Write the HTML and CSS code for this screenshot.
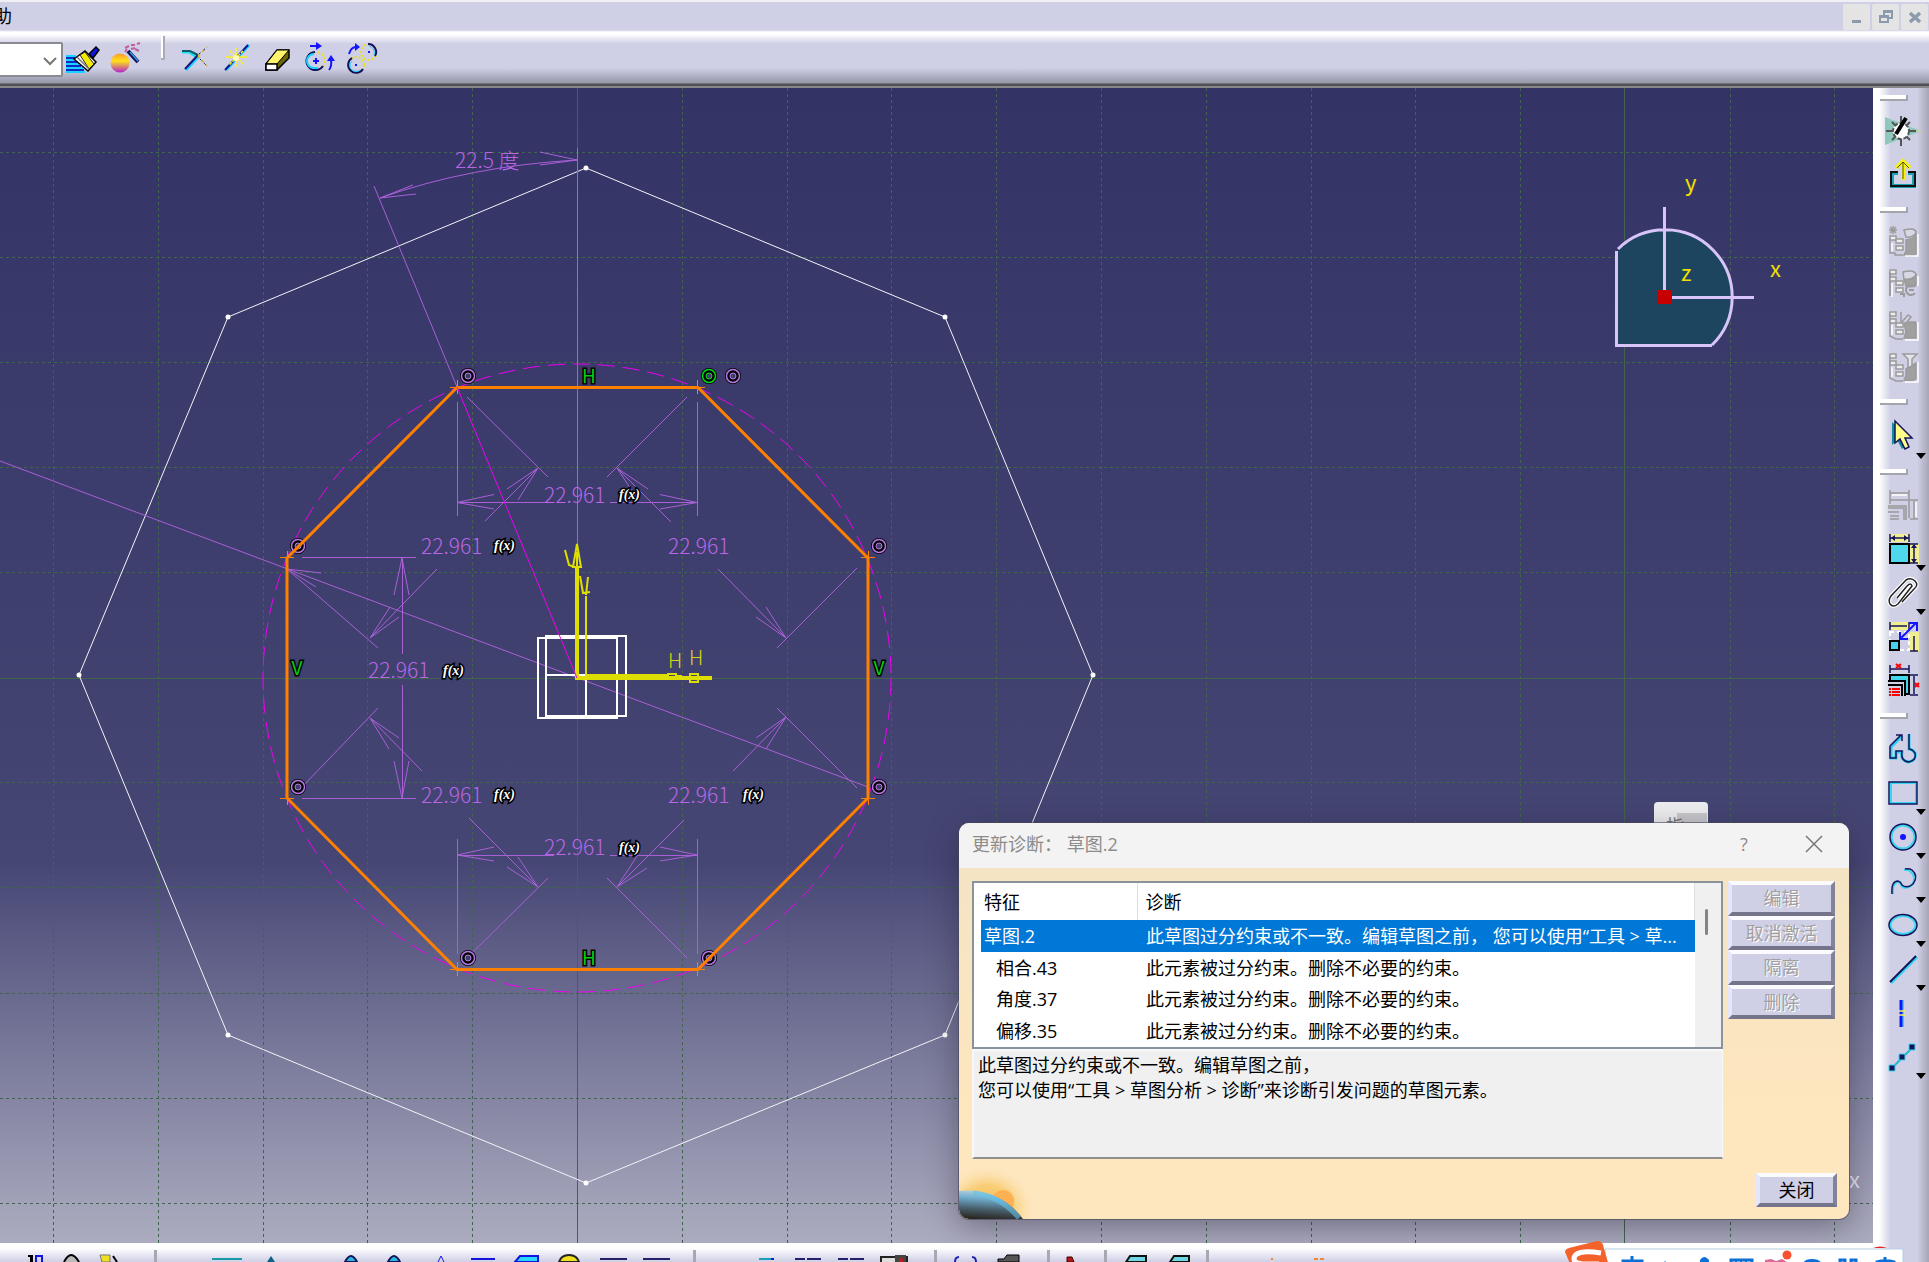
FILE: index.html
```html
<!DOCTYPE html>
<html lang="zh-CN">
<head>
<meta charset="utf-8">
<title>草图.2</title>
<link rel="stylesheet" href="styles.css">
</head>
<body>
<header class="menubar">
  <button class="menu-item" type="button">助</button>
  <div class="window-controls">
    <button type="button" aria-label="最小化"><svg width="16" height="16"><path d="M3 11h9v3H3z" fill="#8b9bad"/></svg></button>
    <button type="button" aria-label="还原"><svg width="16" height="16" fill="none" stroke="#8b9bad" stroke-width="2"><path d="M2 7h8v6H2zM2 8h8M6 6V2h8v7h-4M6 3h8"/></svg></button>
    <button type="button" aria-label="关闭窗口"><svg width="16" height="16" stroke="#8b9bad" stroke-width="3.5"><path d="M3 4l10 9M13 4L3 13"/></svg></button>
  </div>
</header>

<div class="toolbar">
  <label class="combo" aria-label="样式">
    <select><option></option></select>
    <svg width="14" height="8" fill="none" stroke="#777" stroke-width="2"><path d="M1 1l6 6 6-6"/></svg>
  </label>
  <button class="tool" type="button" aria-label="格式刷"><svg width="34" height="34">
    <path d="M0 11h10M0 15h9M0 19h13M0 23h17M0 27h19" stroke="#1ad2ff" stroke-width="2"/><path d="M0 13h9M0 17h11M0 21h15M0 25h18" stroke="#1228c8" stroke-width="2"/>
    <path d="M8 14l11-8 11 11-8 9z" fill="#fff" stroke="#000" stroke-width="1.5"/><path d="M14 10l5-3 9 12-5 5z" fill="#f2ea00" stroke="#222"/><path d="M11 12l12 12" stroke="#777" stroke-width="1.5"/>
    <path d="M23 9l7-7 3 3-6 8z" fill="#1414e0" stroke="#000" stroke-width="1.5"/></svg></button>
  <button class="tool wide" type="button" aria-label="图形属性向导"><svg width="34" height="34">
    <defs><linearGradient id="ball" x1="0" y1="0" x2="0" y2="1"><stop offset="0" stop-color="#ff9a2e"/><stop offset=".4" stop-color="#ffe21a"/><stop offset="1" stop-color="#b21fd0"/></linearGradient></defs>
    <circle cx="9" cy="18" r="9.5" fill="url(#ball)"/><path d="M17 6l10 11" stroke="#101050" stroke-width="4"/><path d="M19 7l8 9" stroke="#2e9cf0" stroke-width="1.5"/>
    <path d="M14 3l4-2m2-1l4 0m2-1l3-1M20 4l4-1m-10 4l2-3m8 0l4 2" stroke="#c060a0" stroke-width="2"/></svg></button>
  <span class="grip"></span>
  <button class="tool" type="button" aria-label="修剪"><svg width="30" height="30">
    <path d="M1 7h7l8 5" fill="none" stroke="#1ce0f0" stroke-width="3"/><path d="M1 6h8l8 4" fill="none" stroke="#0f5a68" stroke-width="2"/><path d="M5 25L17 12" stroke="#1ad2ff" stroke-width="3"/><path d="M4 24L17 10" stroke="#14147a" stroke-width="2"/><path d="M17 11L26 2M17 11l9 10" stroke="#c9b32f" stroke-width="1.500" stroke-dasharray="3 3"/><path d="M18 9l8-7M19 14l7 7" stroke="#222266" stroke-dasharray="2 4"/></svg></button>
  <button class="tool" type="button" aria-label="断开"><svg width="30" height="30">
    <path d="M3 25L26 0" stroke="#1ad2ff" stroke-width="3"/><path d="M2 25L25 0" stroke="#14149a" stroke-width="2"/><path d="M13 3v20M3 12h21M7 6l13 13M20 6L6 20" stroke="#fff31a" stroke-width="1.500" stroke-dasharray="3 1"/><circle cx="13" cy="13" r="3" fill="#fffcc0"/></svg></button>
  <button class="tool" type="button" aria-label="擦除"><svg width="30" height="30">
    <path d="M1 19L12 5h12v8L12 25H1z" fill="#6b6400" stroke="#000" stroke-width="1.500"/><path d="M1 19L12 5h12L12 19z" fill="#fff46a" stroke="#000"/><path d="M1 19h11v6H1z" fill="#fff" stroke="#000" stroke-width="1.500"/></svg></button>
  <button class="tool" type="button" aria-label="旋转"><svg width="32" height="32" fill="none">
    <circle cx="9" cy="16" r="9" stroke="#e8e020" stroke-width="2" stroke-dasharray="2 2"/><path d="M8 7a9 9 0 1 0 8 14" stroke="#101060" stroke-width="2"/><path d="M7 9a7 7 0 0 0 0 14h4" stroke="#1ad2ff" stroke-width="2"/><path d="M9 13v6M6 16h6M3 1h7M22 25q3-4 2-10" stroke="#1414ff" stroke-width="2"/><path d="M9-3l6 4-6 4zM20 16l4-6 4 6z" fill="#1414ff"/></svg></button>
  <button class="tool" type="button" aria-label="对称"><svg width="34" height="32" fill="none">
    <circle cx="20" cy="7" r="8" stroke="#e8e020" stroke-width="2" stroke-dasharray="2 2"/><circle cx="7" cy="20" r="8" stroke="#e8e020" stroke-width="2" stroke-dasharray="2 2"/><path d="M19-1a8 8 0 0 1 7 12M3 13a8 8 0 1 0 11 11" stroke="#101060" stroke-width="2"/><path d="M20 1a7 7 0 0 1 5 9M3 16a6 6 0 0 0 8 9" stroke="#1ad2ff"/><path d="M0 9q2-7 7-7M6 20h2M19 7h2" stroke="#1414ff" stroke-width="2"/><path d="M6-2l5 4-5 4z" fill="#1414ff"/></svg></button>
</div>

<div class="workspace">
  <div class="center">
    <main class="canvas">
      <svg class="sketch" viewBox="0 88 1873 1155" preserveAspectRatio="xMinYMin slice">
        <defs>
          <g id="coin"><circle r="8" fill="#000"/><circle r="6.500" fill="none" stroke="currentColor" stroke-width="1.500"/><circle r="3" fill="#3f3f6d" stroke="currentColor"/></g>
        </defs>
        <g class="grid">
          <path stroke-dasharray="3 3" d="M53.500 88v1155M158.500 88v1155M263.500 88v1155M367.500 88v1155M472.500 88v1155M682.500 88v1155M787.500 88v1155M891.500 88v1155M996.500 88v1155M1101.500 88v1155M1206.500 88v1155M1311.500 88v1155M1415.500 88v1155M1520.500 88v1155M1730.500 88v1155M1834.500 88v1155M0 152.500h1873M0 257.500h1873M0 362.500h1873M0 467.500h1873M0 572.500h1873M0 782.500h1873M0 887.500h1873M0 993.500h1873M0 1098.500h1873M0 1203.500h1873"/>
          <path d="M577.500 88v1155M1624.500 88v1155M0 678.500h1873"/>
        </g>
        <path class="outer" d="M586 168L945 317 1093 675 945 1035 586 1183 228 1035 79 675 228 317z"/>
        <path class="dots" d="M586 168h0M945 317h0M1093 675h0M945 1035h0M586 1183h0M228 1035h0M79 675h0M228 317h0"/>
        <g class="dim">
          <path d="M577.500 148V678M0 461L868 787M457 387L374 186M380 198Q470 166 577 160M380 198l33-13M380 198l36-4M577 160l-37-8M577 160l-37 5"/>
          <path d="M457.500 402V516M697.500 402V516M457 502.500H554M610 502.500H697M494 494.500L457 502.500 494 509M660 494.500L697 502.500 660 509"/>
          <path d="M457.500 839V954M697.500 839V954M457 855.500H554M610 855.500H697M494 847L457 855 494 861M660 847L697 855 660 861"/>
          <path d="M302 557.500H416M302 798.500H416M402.500 558V654M402.500 685V798M394 595L402 558 409 595M394 761L402 798 409 761"/>
          <path d="M467 397L548 477M485 521L538 468M507 489L538 468 518 500M287 569L378 648M437 569L370 638M390 607L370 638 399 617M321 573L287 569 316 587"/>
          <path d="M687 397L607 477M671 522L617 468M648 489L617 468 638 500M857 568L777 648M718 569L786 638M756 617L786 638 766 607"/>
          <path d="M378 708L302 787M422 771L370 718M399 738L370 718 389 749M548 878L467 958M469 818L538 887M507 867L538 887 518 857"/>
          <path d="M777 708L857 788M733 771L786 717M756 738L786 717 766 749M607 878L687 958M684 820L617 887M647 868L617 887 637 856"/>
        </g>
        <g class="dim-text">
          <text x="455" y="168">22.5 度</text>
          <text x="544" y="503">22.961</text><text x="421" y="554">22.961</text><text x="668" y="554">22.961</text>
          <text x="368" y="678">22.961</text><text x="421" y="803">22.961</text><text x="668" y="803">22.961</text><text x="544" y="855">22.961</text>
        </g>
        <g class="formula">
          <text x="619" y="499">f(x)</text><text x="494" y="550">f(x)</text><text x="443" y="675">f(x)</text><text x="494" y="799">f(x)</text><text x="743" y="799">f(x)</text><text x="619" y="852">f(x)</text>
        </g>
        <circle class="guide" cx="577" cy="678" r="314"/>
        <g class="lilac">
          <use href="#coin" x="468" y="376"/><use href="#coin" x="733" y="376"/><use href="#coin" x="298" y="546"/><use href="#coin" x="879" y="546"/><use href="#coin" x="298" y="787"/><use href="#coin" x="879" y="787"/><use href="#coin" x="468" y="958"/><use href="#coin" x="709" y="958"/>
        </g>
        <g class="green"><use href="#coin" x="709" y="376"/></g>
        <path class="octagon" d="M457 387.500H698L868 558V798L698 969.500H457L287 798V558z"/>
        <path class="ticks" d="M450 387.500h14M457.500 380v14M691 387.500h14M697.500 380v14M861 557.500h14M868.500 551v14M861 798.500h14M868.500 791v14M691 969.500h14M697.500 962v14M450 969.500h14M457.500 962v14M280 798.500h14M287.500 791v14M280 557.500h14M287.500 551v14"/>
        <path class="frame" d="M538 638h79v80h-79zM546 636h80v80h-80zM546 675h80M586 635v81"/>
        <path class="axis-thick" d="M577 568V678H700"/>
        <path class="axis" d="M586 596V678M586 675H668M577 544l4 23h-8zM577 552v16M565 550l4 15 8 3M580 576l3 17 7-1M588 577l-2 18M668 674h8v3h-8zM676 676l6 0M690 674h8v8h-8z"/>
        <path class="axis-thick" d="M698 678h14"/>
        <path class="magenta" d="M457 387L577 678"/>
        <g class="constraint"><text x="589" y="383">H</text><text x="589" y="965">H</text><text x="297" y="675">V</text><text x="879" y="675">V</text></g>
        <g class="axis-text"><text x="668" y="668">H</text><text x="689" y="665">H</text></g>
        <path class="compass" d="M1617 346V249A67 67 0 1 1 1712 346z"/>
        <path class="compass-line" d="M1616.500 251V345.500H1712M1618 249A67 67 0 1 1 1712 345M1664.500 207V290M1672 297.500H1754"/>
        <path d="M1658 290h14v14h-14z" fill="#c60000"/>
        <g class="compass-text"><text x="1685" y="191">y</text><text x="1770" y="277">x</text><text x="1681" y="281">z</text></g>
        <text class="axis-x" x="1849" y="1188">x</text>
      </svg>

      <div class="hint">指</div>

      <section class="dialog" role="dialog" aria-labelledby="dlg-title">
        <header class="dialog-title">
          <h1 id="dlg-title">更新诊断： 草图.2</h1>
          <button type="button" class="help">?</button>
          <button type="button" class="close" aria-label="关闭对话框"><svg width="16" height="16" stroke="#777" stroke-width="1.500"><path d="M0 0l16 16M16 0L0 16"/></svg></button>
        </header>
        <div class="dialog-body">
          <div class="report">
            <div class="list">
              <table>
                <thead><tr><th class="feature">特征</th><th>诊断</th></tr></thead>
                <tbody>
                  <tr class="selected"><td>草图.2</td><td>此草图过分约束或不一致。编辑草图之前， 您可以使用“工具 &gt; 草...</td></tr>
                  <tr class="child"><td>相合.43</td><td>此元素被过分约束。删除不必要的约束。</td></tr>
                  <tr class="child"><td>角度.37</td><td>此元素被过分约束。删除不必要的约束。</td></tr>
                  <tr class="child"><td>偏移.35</td><td>此元素被过分约束。删除不必要的约束。</td></tr>
                </tbody>
              </table>
              <div class="scroll"><span></span></div>
            </div>
            <p class="detail">此草图过分约束或不一致。编辑草图之前，<br>您可以使用“工具 &gt; 草图分析 &gt; 诊断”来诊断引发问题的草图元素。</p>
          </div>
          <div class="actions">
            <button type="button" class="push" disabled>编辑</button>
            <button type="button" class="push" disabled>取消激活</button>
            <button type="button" class="push" disabled>隔离</button>
            <button type="button" class="push" disabled>删除</button>
          </div>
        </div>
        <footer class="dialog-foot">
          <svg class="globe" width="80" height="52">
            <defs><radialGradient id="glow" cx=".5" cy=".5" r=".5"><stop offset="0" stop-color="#f8b850"/><stop offset=".55" stop-color="#f8cf78"/><stop offset="1" stop-color="#fee6be" stop-opacity="0"/></radialGradient>
            <linearGradient id="earth" x1=".5" y1="0" x2=".35" y2="1"><stop offset="0" stop-color="#bcd4dc"/><stop offset=".3" stop-color="#6faccd"/><stop offset=".65" stop-color="#48606c"/><stop offset="1" stop-color="#2a2522"/></linearGradient></defs>
            <ellipse cx="28" cy="42" rx="48" ry="44" fill="url(#glow)"/><circle cx="44" cy="34" r="11" fill="#ffb050"/><path d="M0 24Q40 20 64 52H0z" fill="url(#earth)"/><path d="M14 26Q40 28 60 51" fill="none" stroke="#66c2e8" stroke-width="5" opacity=".6"/>
          </svg>
          <button type="button" class="push">关闭</button>
        </footer>
      </section>
    </main>

    <div class="bottombar">
      <div class="bgroup g1">
        <button type="button" aria-label="工具 1"><svg width="28" height="8"><path d="M15 8V2h6v6" fill="none" stroke="#1414e0" stroke-width="2"/><path d="M7 1h5v7H9V3H7z"/></svg></button>
        <button type="button" aria-label="工具 2"><svg width="28" height="8"><path d="M5 8q7-14 15 0" fill="#bbb" stroke="#000" stroke-width="2"/></svg></button>
        <button type="button" aria-label="工具 3"><svg width="28" height="8"><path d="M3 1h10v7H5z" fill="#f0e020" stroke="#777"/><path d="M16 2l4 6" stroke="#000" stroke-width="2"/></svg></button>
      </div>
      <div class="bgroup g2">
        <button type="button" aria-label="草图工具 1"><svg width="30" height="8"><path d="M0 5h30" stroke="#189aa8" stroke-width="2"/></svg></button>
        <button type="button" aria-label="草图工具 2"><svg width="28" height="8"><path d="M11 8l4-6 4 6z" fill="#10608a"/></svg></button>
        <span></span>
        <button type="button" aria-label="草图工具 3"><svg width="28" height="8"><path d="M3 8q6-12 12 0z" fill="#28b8e0" stroke="#14145a" stroke-width="2"/></svg></button>
        <button type="button" aria-label="草图工具 4"><svg width="28" height="8"><path d="M3 8q6-12 12 0z" fill="#28b8e0" stroke="#14145a" stroke-width="2"/></svg></button>
        <button type="button" aria-label="草图工具 5"><svg width="28" height="8"><path d="M10 8l3-6 3 6" fill="none" stroke="#1414e0"/></svg></button>
        <button type="button" aria-label="草图工具 6"><svg width="28" height="8"><path d="M0 5h24" stroke="#1414e0" stroke-width="2"/></svg></button>
        <button type="button" aria-label="草图工具 7"><svg width="28" height="8"><path d="M1 8l5-6h18v6z" fill="#28d8ff" stroke="#1414e0" stroke-width="2"/></svg></button>
        <button type="button" aria-label="草图工具 8"><svg width="28" height="8"><path d="M2 8q2-7 10-7t10 7z" fill="#f0e020" stroke="#222" stroke-width="2"/></svg></button>
        <button type="button" aria-label="草图工具 9"><svg width="28" height="8"><path d="M0 5h27" stroke="#22226a" stroke-width="2"/></svg></button>
        <button type="button" aria-label="草图工具 10"><svg width="28" height="8"><path d="M0 5h27" stroke="#22226a" stroke-width="2"/></svg></button>
      </div>
      <div class="bgroup g3">
        <button type="button" aria-label="显示 1"><svg width="28" height="8"><path d="M7 5h12" stroke="#18a0b8" stroke-width="2"/><path d="M19 5h3" stroke="#1414e0" stroke-width="2"/></svg></button>
        <button type="button" aria-label="显示 2"><svg width="28" height="8"><path d="M0 5h10m2 0h14" stroke="#22226a" stroke-width="2"/></svg></button>
        <button type="button" aria-label="显示 3"><svg width="28" height="8"><path d="M0 5h10m2 0h14" stroke="#22226a" stroke-width="2"/></svg></button>
        <button type="button" aria-label="显示 4"><svg width="28" height="8"><path d="M0 3h26v6H0z" fill="#ddd" stroke="#222" stroke-width="2"/><path d="M14 1h11v7H14z" fill="#444"/><path d="M18 4h4v4h-4z" fill="#b02020"/></svg></button>
      </div>
      <div class="bgroup g4">
        <button type="button" aria-label="更新"><svg width="28" height="8"><path d="M3 8q0-5 4-5M20 3q4 0 4 5" fill="none" stroke="#2222b0" stroke-width="2"/></svg></button>
        <button type="button" aria-label="文件"><svg width="28" height="8"><path d="M3 5h6l3-4h12v7H3z" fill="#555" stroke="#000"/></svg></button>
      </div>
      <div class="bgroup g5"><button type="button" aria-label="标记"><svg width="28" height="8"><path d="M9 8V3h5l2 5z" fill="#b01818" stroke="#400"/></svg></button></div>
      <div class="bgroup g6">
        <button type="button" aria-label="实体 1"><svg width="28" height="8"><path d="M3 8l4-6h16v6z" fill="#6fd8e4" stroke="#111" stroke-width="2"/></svg></button>
        <button type="button" aria-label="实体 2"><svg width="28" height="8"><path d="M4 8l4-6h15v6z" fill="#6fd8e4" stroke="#111" stroke-width="2"/></svg></button>
      </div>
      <div class="bgroup g7"><svg width="60" height="8"><path d="M4 5h2M47 5h4M53 5h4" stroke="#ec8a3a" stroke-width="2"/></svg></div>
    </div>
  </div>

  <aside class="sidebar">
    <div class="sgroup">
      <button type="button" aria-label="草图求解"><svg width="36" height="32"><path d="M0 2l36 14L0 30z" fill="#8ec8bc"/><path d="M18 16L36 16" stroke="#e8e090"/><path d="M16 1v30M1 16h30M7 7l18 18M25 7L7 25" stroke="#555" stroke-width="2"/><circle cx="16" cy="16" r="8" fill="#fff" stroke="#555" stroke-width="2" stroke-dasharray="4 2"/><path d="M11 19L21 3" stroke="#000" stroke-width="4"/></svg></button>
      <button type="button" aria-label="退出工作台"><svg width="32" height="32" fill="none"><path d="M11 14H5v13h22V14h-6" stroke="#1aa0b0" stroke-width="4"/><path d="M11 13H4v14h24V13h-7" stroke="#111" stroke-width="2"/><path d="M16 21V2M9 9l7-7 7 7" stroke="#f7f01a" stroke-width="4"/><path d="M16 20V3M10 9l6-6 6 6" stroke="#555500"/></svg></button>
    </div>
    <div class="sgroup dense">
      <button type="button" disabled aria-label="约束 1"><svg width="32" height="32" fill="none" stroke="#9b9b9b" stroke-width="1.500"><path d="M19 14q8-1 10-6v20q-3 3-12 1l2-4z" fill="#a0a0a0"/><path d="M17 4q12-3 12 3-4 5-10 4z" fill="#d8d8e4"/><path d="M3 12v15h5v2h8M6 0v8M2 4h8M3 1l6 6M9 1L3 7"/><path d="M3 10h6v4H3zM9 13h7v4H9zM9 20h7v4H9z" fill="#eee"/><path d="M5 17v8M31 8v22H18" stroke="#fff"/></svg></button>
      <button type="button" disabled aria-label="约束 2"><svg width="32" height="32" fill="none" stroke="#9b9b9b" stroke-width="1.500"><path d="M17 11q8 2 12-3v9q-5 3-10 1z" fill="#a0a0a0"/><path d="M16 4q12-3 13 3-4 5-12 4z" fill="#d8d8e4"/><path d="M3 4v24M28 19a5 5 0 1 0 0 6M22 22h5M13 26h4v3" stroke-width="2"/><path d="M3 2h6v4H3zM3 9h6v4H3zM9 13h7v4H9zM9 20h7v4H9z" fill="#eee"/><path d="M5 15v14M31 8v10" stroke="#fff"/></svg></button>
      <button type="button" disabled aria-label="约束 3"><svg width="32" height="32" fill="none" stroke="#9b9b9b" stroke-width="1.500"><path d="M17 13h12v15H17l2-6z" fill="#a0a0a0"/><path d="M14 13l7-8 3 2-4 5h9M14 2v10M3 4v22l6 3h7"/><path d="M3 2h6v4H3zM3 9h6v4H3zM9 13h7v4H9zM9 20h7v4H9z" fill="#eee"/><path d="M5 15v10M31 12v18H18" stroke="#fff"/></svg></button>
      <button type="button" disabled aria-label="约束 4"><svg width="32" height="32" fill="none" stroke="#9b9b9b" stroke-width="1.500"><path d="M19 17l10-6v16q-4 3-12 1l2-4z" fill="#a0a0a0"/><path d="M16 2h14l-5 5v7l-4 2V7z" fill="#e4e4ec"/><path d="M3 4v22l6 3h7"/><path d="M3 2h6v4H3zM3 9h6v4H3zM9 13h7v4H9zM9 20h7v4H9z" fill="#eee"/><path d="M5 15v10M31 10v20H18" stroke="#fff"/></svg></button>
    </div>
    <div class="sgroup tall">
      <button type="button" class="more" aria-label="选择"><svg width="32" height="32"><path d="M5 2v23l5-5 5 9 5-3-4-8h7z" fill="#138c98"/><path d="M8 1v22l5-4 5 10 4-2-4-9h7z" fill="#ffff8a" stroke="#14145a" stroke-width="1.500"/></svg></button>
    </div>
    <div class="sgroup">
      <button type="button" disabled aria-label="对话框定义约束"><svg width="34" height="34" fill="none" stroke="#999" stroke-width="1.500"><path d="M4 2v14M23 2v28M4 5h19M4 12h19M24 12h8M28 13v18M24 31h8M2 18h18v14M2 20h16v12M2 24h11M4 28h9M4 31h9"/><path d="M6 7h15M30 14v15" stroke="#fff"/></svg></button>
      <button type="button" class="more" aria-label="约束"><svg width="34" height="34"><path d="M3 2h21v8H3zM24 12h9v20h-9z" fill="#f1ed91"/><path d="M4 12h19v19H4z" fill="#4fd7ee" stroke="#000" stroke-width="2"/><path d="M4 2v8M23 2v8M4 6h19M24 12h8M28 13v18M24 31h8" stroke="#14145a" stroke-width="1.500"/><path d="M5 6l4-3v6zM22 6l-4-3v6zM28 12l-3 4h6zM28 31l-3-4h6z" fill="#14145a"/></svg></button>
      <button type="button" class="more" aria-label="接触约束"><svg width="32" height="32" fill="none"><path d="M10 21L20 9q4-4 5 0L11 27q-5 4-8 0-2-4 1-8L19 3q5-3 9 1t-1 8L15 25" stroke="#fff" stroke-width="4"/><path d="M10 21L20 9q4-4 5 0L11 27q-5 4-8 0-2-4 1-8L19 3q5-3 9 1t-1 8L15 25" stroke="#222" stroke-width="1.500"/></svg></button>
      <button type="button" aria-label="动画约束"><svg width="34" height="34" fill="none"><path d="M3 2h21v8H3zM24 12h9v20h-9z" fill="#f1ed91"/><path d="M4 12h19v18H4z" stroke="#fff" stroke-width="2" stroke-dasharray="4 3"/><path d="M4 21h9v9H4z" fill="#43d5ed" stroke="#000" stroke-width="2"/><path d="M4 2v8M23 2v8M4 6h17M28 16v15M24 31h8" stroke="#14145a" stroke-width="1.500"/><path d="M15 18L30 3M23 3h8v8M14 12v7h8" stroke="#1414ff" stroke-width="2"/></svg></button>
      <button type="button" aria-label="编辑多重约束"><svg width="34" height="34" fill="none"><path d="M4 11h19v19H4z" fill="#43d5ed" stroke="#000" stroke-width="2"/><path d="M2 17h16v16H2z" fill="#cfcfe6"/><path d="M2 17h17v15M2 21h14v11" stroke="#000" stroke-width="2"/><path d="M3 25h11M3 28h11M3 31h11" stroke="#f00" stroke-width="2" stroke-dasharray="2 1 20"/><path d="M4 1v8M23 1v8M4 5h19M24 11h8M28 12v18M24 31h8" stroke="#14145a" stroke-width="1.500"/><path d="M10 0l5 4M15 0l-5 4M29 19l4 4M33 19l-4 4" stroke="#f00" stroke-width="2"/></svg></button>
    </div>
    <div class="sgroup">
      <button type="button" aria-label="轮廓"><svg width="32" height="32" fill="none"><path d="M4 14v11h5v-6h6q-2 9 7 10 8-2 6-9-3-4-6-4V1M4 14L15 3" stroke="#28d0f0" stroke-width="3"/><path d="M3 13v12h6v-7h6q-2 10 7 11 8-2 6-9-3-4-6-4V1M3 13L14 2M9 2h6v6" stroke="#14145a" stroke-width="1.500"/></svg></button>
      <button type="button" class="more" aria-label="矩形"><svg width="32" height="32" fill="none"><path d="M4 6h25v20H4z" stroke="#36d6f2" stroke-width="2"/><path d="M2 5h28v22H2z" stroke="#14145a" stroke-width="1.500"/></svg></button>
      <button type="button" class="more" aria-label="圆"><svg width="32" height="32" fill="none"><circle cx="16" cy="16" r="11.500" stroke="#36d6f2" stroke-width="2"/><circle cx="16" cy="16" r="13" stroke="#14145a" stroke-width="1.500"/><circle cx="16" cy="16" r="3" fill="#1414ff"/></svg></button>
      <button type="button" class="more" aria-label="样条线"><svg width="32" height="32" fill="none"><path d="M6 29q-1-13 7-12 2 9 11 4 7-8-1-15-3-2-6-1" stroke="#36d6f2" stroke-width="2"/><path d="M5 29q-1-13 6-13 3 1 4 4 5 4 11-1 6-8-1-14-3-2-7-1" stroke="#14145a" stroke-width="1.500"/></svg></button>
      <button type="button" class="more" aria-label="椭圆"><svg width="32" height="32" fill="none"><ellipse cx="16" cy="16" rx="12.500" ry="9" stroke="#36d6f2" stroke-width="2"/><ellipse cx="16" cy="16" rx="14" ry="10.500" stroke="#14145a" stroke-width="1.500"/></svg></button>
      <button type="button" class="more" aria-label="直线"><svg width="32" height="32"><path d="M4 30L30 4" stroke="#36d6f2" stroke-width="3"/><path d="M3 29L29 3" stroke="#14145a" stroke-width="2"/></svg></button>
      <button type="button" aria-label="轴"><svg width="32" height="32"><path d="M16 3v27" stroke="#36d6f2" stroke-width="2"/><path d="M14 3v27" stroke="#1414ff" stroke-width="3"/><path d="M12 14h6M12 18h6" stroke="#fff060" stroke-width="1.500"/></svg></button>
      <button type="button" class="more" aria-label="点"><svg width="32" height="32"><path d="M5 27L27 5" stroke="#20b8d0" stroke-width="2"/><path d="M2 24h6v6H2zM12 13h6v6h-6zM22 3h6v6h-6z" fill="#14145a" stroke="#36d6f2"/></svg></button>
    </div>
  </aside>
</div>

<div class="ime">
  <svg width="350" height="24">
    <path d="M40 8h298v18H40z" fill="#fff" stroke="#b4cfe2" stroke-width="1"/>
    <path d="M308 7q7-3 14 0z" fill="#e02828"/>
    <path d="M0 11q0-3 4-4L32 0q5 0 6 4l6 21H6z" fill="#f4622c"/><path d="M36 12Q9 8 9 18q0 4 9 5h16" fill="none" stroke="#fff" stroke-width="5"/>
    <g fill="none" stroke="#0b6fd6" stroke-width="3"><path d="M58 24v-4h19v4M67 15v9"/><path d="M166 24v-5h21v5" /><path d="M171 20v4M176 20v4M181 20v4" stroke-width="2"/><path d="M275 24v-5h5v5M286 24v-5h5v5"/><path d="M312 24v-3l4-1h9l4 1v3M320 16v4"/></g>
    <path d="M96 24l4-4 4 4zM135 24v-5q4-6 9 0v5z" fill="#0b6fd6"/>
    <path d="M200 24v-5l6-1 5 2 6-2 5 3v3z" fill="#d96a95"/><circle cx="222" cy="14" r="4.500" fill="#fa5030"/>
    <path d="M238 24q0-6 9-6t10 6z" fill="#0b6fd6"/>
  </svg>
</div>
</body>
</html>
```
FILE: styles.css
```css
* { box-sizing: border-box; }
html, body { height: 100%; }
body {
  margin: 0;
  display: flex;
  flex-direction: column;
  overflow: hidden;
  position: relative;
  background: #cfcfe6;
  color: #000;
  font: 18px/24px "Open Sans", "Noto Sans CJK SC", sans-serif;
}
button { font: inherit; color: inherit; border: 0; padding: 0; background: none; }
svg { display: block; overflow: visible; }

.menubar {
  height: 30px;
  flex: none;
  display: flex;
  justify-content: space-between;
  border-top: 2px solid #f0f0f4;
}
.menu-item { margin-left: -6px; }
.window-controls { display: flex; gap: 2px; padding: 2px 1px 0 0; }
.window-controls button {
  width: 27px;
  height: 26px;
  display: grid;
  place-items: center;
  border-radius: 2px;
  background: #e4e4e4;
}

.toolbar {
  height: 58px;
  flex: none;
  display: flex;
  align-items: flex-start;
  padding-top: 12px;
  border-bottom: 2px solid #87878a;
  background: linear-gradient(#cfcfe6 0, #fff 2px, #fff 4px, #cfcfe6 14px, #cfcfe6 38px, #9797aa 53px, #505054 54px);
}
.combo { position: relative; width: 63px; height: 35px; overflow: hidden; margin-right: 3px; }
.combo select {
  appearance: none;
  width: 70px;
  height: 35px;
  margin-left: -7px;
  border: 2px solid #8a8a92;
  border-radius: 2px;
  background: #fff;
}
.combo svg { position: absolute; right: 6px; top: 15px; }
.tool { width: 42px; display: flex; padding-top: 3px; }
.tool.wide { padding-left: 3px; }
.grip {
  width: 4px;
  height: 24px;
  margin: -6px 16px 0 11px;
  border: solid #aaaabb;
  border-width: 0 2px 2px 0;
  background: #fff;
}

.workspace { flex: 1; min-height: 0; display: flex; }
.center { flex: 1; min-width: 0; display: flex; flex-direction: column; }
.canvas {
  flex: 1;
  min-height: 0;
  position: relative;
  overflow: hidden;
  background: linear-gradient(#333366 0, #414170 50%, #464675 67%, #acacc0 100%);
}
.sketch { position: absolute; inset: 0; width: 100%; height: 100%; overflow: hidden; font-family: "Noto Sans CJK SC", sans-serif; }
.grid path { fill: none; stroke: #41644f; }
.outer { fill: none; stroke: #f4f4fa; stroke-width: 1; }
.dots { fill: none; stroke: #fff; stroke-width: 5; stroke-linecap: round; }
.dim path { fill: none; stroke: #a95fd6; stroke-width: 1; }
.dim-text { fill: #b866e4; font-size: 21px; font-weight: 300; }
.formula {
  fill: #fff;
  stroke: #000;
  stroke-width: 3px;
  paint-order: stroke;
  font: italic bold 14px "Liberation Serif", serif;
}
.guide { fill: none; stroke: #f000f0; stroke-width: 1; stroke-dasharray: 17 8; }
.magenta { fill: none; stroke: #f000f0; }
.lilac { color: #b878e4; }
.green { color: #00d818; }
.octagon { fill: none; stroke: #ff8000; stroke-width: 3; }
.ticks { fill: none; stroke: #ff8000; stroke-width: 1; }
.frame { fill: none; stroke: #fff; stroke-width: 2; }
.axis { fill: none; stroke: #dede00; stroke-width: 2; }
.axis-thick { fill: none; stroke: #dede00; stroke-width: 4; }
.constraint {
  fill: #00d010;
  stroke: #000;
  stroke-width: 3px;
  paint-order: stroke;
  font-size: 19px;
  text-anchor: middle;
}
.axis-text { fill: #d6d610; font-size: 20px; font-weight: 300; }
.compass { fill: #1d4560; }
.compass-line { fill: none; stroke: #d9c4fa; stroke-width: 3; }
.compass-text { fill: #f0e000; font-size: 22px; }
.axis-x { fill: #e4e4ee; font-size: 22px; }

.hint {
  position: absolute;
  left: 1654px;
  top: 714px;
  width: 54px;
  height: 36px;
  padding: 12px 0 0 12px;
  border-radius: 4px;
  background: linear-gradient(#c8c8cc, #c8c8cc) 23px 11px / 30px 25px no-repeat, #eeeef0;
  color: #777;
}

.dialog {
  position: absolute;
  left: 959px;
  top: 735px;
  width: 890px;
  border-radius: 10px;
  overflow: hidden;
  background: linear-gradient(#f4e4c4 45px, #fee6be 290px);
  box-shadow: 0 0 0 1px rgba(70, 70, 85, .6), 0 8px 32px rgba(30, 25, 40, .4);
}
.dialog-title { height: 45px; display: flex; align-items: center; padding: 0 0 3px 13px; background: #f3f3f3; color: #8c8c8c; }
.dialog-title h1 { flex: 1; margin: 0; font: inherit; }
.help, .close { width: 70px; height: 42px; display: grid; place-items: center; }
.dialog-body { display: flex; gap: 5px; padding: 13px 14px 0 13px; }
.report { flex: 1; min-width: 0; }
.list { display: flex; height: 168px; border: 2px solid #8a929c; background: #fff; }
.list table { flex: 1; margin-left: 7px; border-collapse: collapse; table-layout: fixed; }
.list th { height: 37px; padding: 0 0 0 8px; text-align: left; font-weight: normal; border-right: 1px solid #e0e0e0; }
.feature { width: 156px; }
.list td { height: 31px; padding: 0 0 0 4px; white-space: nowrap; }
.list td + td { padding-left: 9px; }
.list td:first-child, .list .feature { padding-left: 3px; }
.list .child td:first-child { padding-left: 15px; }
.selected { background: #0078d7; color: #fff; }
.scroll { width: 26px; padding: 26px 10px 0; background: #f0f0f0; }
.scroll span { display: block; width: 3px; height: 26px; border-radius: 2px; background: #858585; }
.detail {
  height: 110px;
  margin: 0;
  padding: 2px 0 0 4px;
  line-height: 25px;
  border: solid #f8f8f8;
  border-width: 2px 1px 2px 2px;
  border-bottom-color: #909090;
  background: #f0f0f0;
}
.actions { width: 107px; height: 138px; display: flex; flex-direction: column; }
.push {
  flex: 1;
  border: 4px solid;
  border-color: #fafaff #82829a #74748a #e6e6fa;
  background: #cfcfe6;
}
.push:disabled { color: #a0a0a4; text-shadow: 1px 1px #fff; }
.dialog-foot { display: flex; align-items: flex-end; justify-content: space-between; padding-right: 12px; height: 60px; }
.dialog-foot .push { flex: none; width: 81px; height: 34px; margin-bottom: 12px; }

.bottombar {
  height: 19px;
  flex: none;
  display: flex;
  overflow: hidden;
  padding-top: 7px;
  background: linear-gradient(#fff 5px, #cfcfe6);
}
.bgroup { display: flex; height: 20px; border-left: 3px solid #a8a8b4; }
.bgroup button, .bgroup > span { width: 43px; display: flex; justify-content: center; padding-top: 4px; }
.g1 { border: 0; padding-left: 16px; width: 154px; }
.g1 button { width: 38px; }
.g2 { padding-left: 48px; width: 539px; }
.g3 { padding-left: 48px; width: 241px; }
.g4 { padding-left: 7px; width: 113px; }
.g5 { width: 57px; }
.g6 { padding-left: 8px; width: 102px; }
.g7 { padding: 4px 0 0 58px; }

.sidebar {
  width: 56px;
  flex: none;
  padding: 7px 0 0 7px;
  background: linear-gradient(90deg, #fff 6px, #cfcfe6 18px, #cfcfe6 44px, #a6a6b8 56px);
}
.sgroup { display: flex; flex-direction: column; margin-bottom: 10px; }
.sgroup::before {
  content: "";
  width: 26px;
  height: 4px;
  margin-bottom: 8px;
  border: solid #a4a4ac;
  border-width: 0 2px 2px 0;
  background: #fff;
}
.sgroup button { position: relative; height: 44px; padding-right: 4px; display: grid; place-items: center; }
.sgroup.dense button { height: 42px; }
.sgroup.tall button { height: 46px; }
.sgroup .more::after {
  content: "";
  position: absolute;
  right: 3px;
  bottom: 0;
  border: 5px solid transparent;
  border-top: 6px solid #000;
  border-bottom: 0;
}

.ime { position: absolute; right: 14px; bottom: -3px; }
```
